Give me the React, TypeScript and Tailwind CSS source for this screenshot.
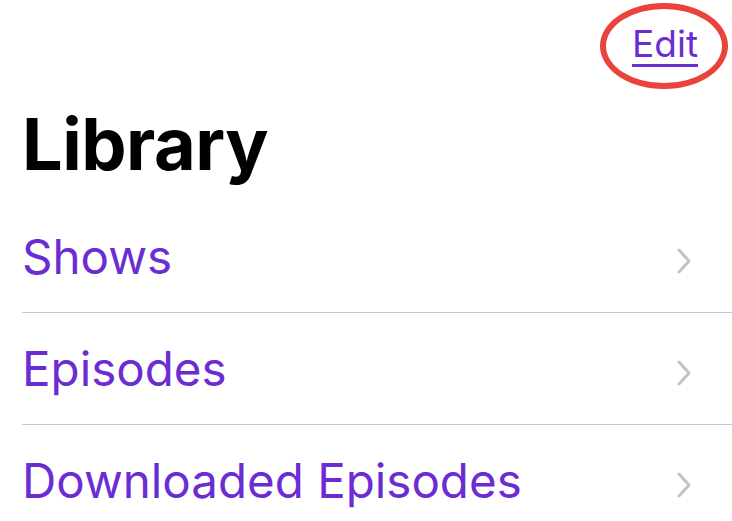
const rows = ["Shows", "Episodes", "Downloaded Episodes"];

const Chevron = () => (
  <svg width="16" height="26" viewBox="0 0 16 26" fill="none" className="shrink-0 mt-[8px]">
    <path d="M3 2 L13 13 L3 24" stroke="#c4c4c6" strokeWidth="3" strokeLinecap="round" strokeLinejoin="round" />
  </svg>
);

export default function App() {
  return (
    <div className="w-[732px] h-[521px] overflow-hidden bg-white font-['Inter',sans-serif]">
      <div className="h-[100px] flex items-start justify-end pr-[34px] pt-[25px]">
        <div className="relative">
          <a className="block text-[37px] leading-none text-[#6b2cd3] underline decoration-[3px] underline-offset-[7px]">
            Edit
          </a>
          <div className="absolute -left-[32px] -right-[30px] -top-[22px] -bottom-[27px] rounded-[50%] border-[6px] border-[#e9433b]" />
        </div>
      </div>

      <h1 className="mt-[8px] pl-[22px] text-[72px] leading-none font-bold text-black tracking-[-0.5px]">
        Library
      </h1>

      <ul className="mt-[21px] ml-[22px]">
        {rows.map((label) => (
          <li
            key={label}
            className="h-[112px] flex items-center justify-between pr-[40px] border-b border-[#c8c8cc]"
          >
            <span className="text-[47.5px] leading-none text-[#6b2cd3]">{label}</span>
            <Chevron />
          </li>
        ))}
      </ul>
    </div>
  );
}
